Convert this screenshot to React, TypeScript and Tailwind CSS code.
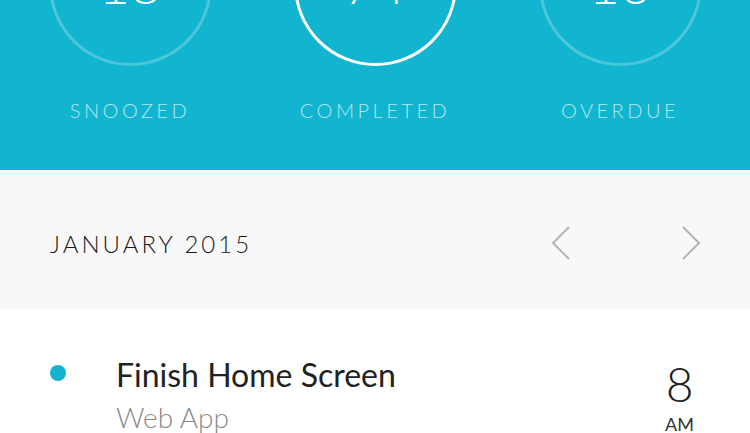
import React from "react";

const font = { fontFamily: "Lato, 'Noto Sans', sans-serif" };

function Stat({ n, label, active }: { n: string; label: string; active?: boolean }) {
  return (
    <div className="flex flex-col items-center w-[163px]">
      <div
        className={`w-[163px] h-[163px] rounded-full border-[3px] flex items-center justify-center ${
          active ? "border-white" : "border-[#4cc6da]"
        }`}
      >
        <span className="text-white text-[54px] font-light leading-none mt-[-2px]">{n}</span>
      </div>
      <div className="mt-[32px] text-[20px] leading-[24px] tracking-[3.5px] text-[#b4e7f0] font-light whitespace-nowrap">
        {label}
      </div>
    </div>
  );
}

export default function App() {
  return (
    <div className="w-[750px] h-[433px] overflow-hidden bg-white" style={font}>
      <div className="bg-[#11b5cf] h-[267px] flex justify-center gap-[82px] -mt-[97px]">
        <Stat n="18" label="SNOOZED" />
        <Stat n="74" label="COMPLETED" active />
        <Stat n="16" label="OVERDUE" />
      </div>
      <div className="bg-[#f8f8f8] h-[139px] flex items-center pl-[50px] pr-[48px]">
        <div className="flex-1 text-[24px] tracking-[3px] text-[#1a1a1a] font-light mt-[8px]">JANUARY 2015</div>
        <svg width="22" height="36" viewBox="0 0 22 36" className="mr-[108px] mt-[6px]">
          <path d="M19 2 L3 18 L19 34" fill="none" stroke="#b5b5b5" strokeWidth="2" />
        </svg>
        <svg width="22" height="36" viewBox="0 0 22 36" className="mt-[6px]">
          <path d="M3 2 L19 18 L3 34" fill="none" stroke="#b5b5b5" strokeWidth="2" />
        </svg>
      </div>
      <div className="flex pl-[50px] pr-[56px] pt-[46px]">
        <div className="w-[16px] h-[16px] rounded-full bg-[#15b3cd] mt-[10px]" />
        <div className="flex-1 ml-[50px]">
          <div className="text-[32px] leading-[40px] text-[#222]">Finish Home Screen</div>
          <div className="text-[28px] leading-[36px] text-[#8a8a8a] mt-[4px] font-light">Web App</div>
        </div>
        <div className="flex flex-col items-center">
          <div className="text-[48px] leading-[52px] font-light text-[#222] mt-[3px]">8</div>
          <div className="text-[18px] leading-[22px] text-[#333] mt-[3px]">AM</div>
        </div>
      </div>
    </div>
  );
}
